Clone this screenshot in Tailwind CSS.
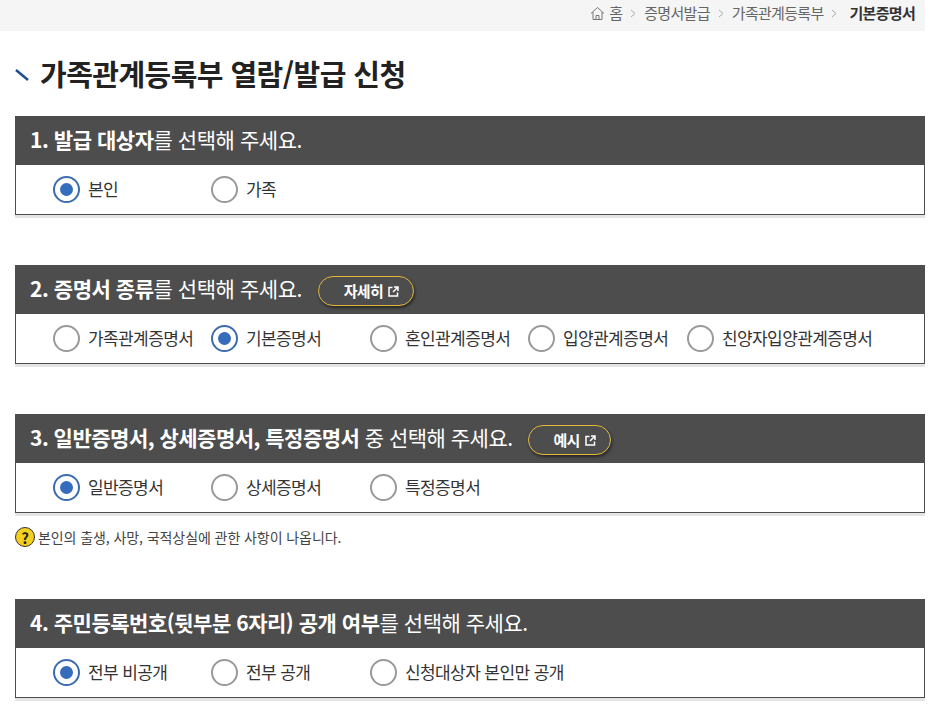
<!DOCTYPE html>
<html lang="ko">
<head>
  <meta charset="UTF-8" />
  <title>가족관계등록부 열람/발급 신청</title>
  <script src="https://cdn.jsdelivr.net/npm/@tailwindcss/browser@4"></script>
</head>
<body class="bg-white text-[#333] font-['Noto_Sans_CJK_KR','Noto_Sans',sans-serif] overflow-hidden">
  <div class="w-[925px] h-[723px] overflow-hidden">
    <nav class="h-[31px] pb-[5px] bg-[#f5f5f5] flex items-center justify-end pr-[10px] text-[15px] tracking-[-0.7px] text-[#666]">
      <svg class="w-[15px] h-[15px] mr-[4px]" viewBox="0 0 15 15" fill="none" stroke="#777" stroke-width="1"><path d="M1 7.500 7.500 1.500 14 7.500M3 6v7.500h9V6M6 13.500V9.500h3v4"/></svg>
      <span>홈</span>
      <svg class="w-[6px] h-[9px] mx-[8px]" viewBox="0 0 6 9" fill="none" stroke="#aaa"><path d="M1 1l4 3.500-4 3.500"/></svg>
      <span>증명서발급</span>
      <svg class="w-[6px] h-[9px] mx-[8px]" viewBox="0 0 6 9" fill="none" stroke="#aaa"><path d="M1 1l4 3.500-4 3.500"/></svg>
      <span>가족관계등록부</span>
      <svg class="w-[6px] h-[9px] ml-[8px] mr-[12px]" viewBox="0 0 6 9" fill="none" stroke="#aaa"><path d="M1 1l4 3.500-4 3.500"/></svg>
      <b class="font-bold text-[#333]">기본증명서</b>
    </nav>

    <h1 class="h-[85px] pt-[1px] pl-[15px] flex items-center font-bold text-[29px] tracking-[-0.55px] text-[#222]">
      <svg class="w-[14px] h-[12px] mr-[11px] mt-[2px]" viewBox="0 0 14 12" fill="none"><path d="M1 1l12 10" stroke="#1d4f91" stroke-width="2.500"/></svg>
      가족관계등록부 열람/발급 신청
    </h1>

    <section class="ml-[15px] mb-[50px] shadow-[0_3px_0_#e4e4e4]">
      <h2 class="h-[49px] pb-[1px] bg-[#4d4d4d] text-white text-[21px] pl-[15px] flex items-center font-normal tracking-[-0.45px]"><span><b class="font-bold">1. 발급 대상자</b>를 선택해 주세요.</span></h2>
      <div class="h-[50px] pb-[1px] border border-t-0 border-[#4d4d4d] pl-[37px] grid grid-cols-[158px_159px_158px_159px_1fr] items-center text-[17px] tracking-[-0.6px]">
        <label class="flex items-center gap-[8px]"><span class="w-[27px] h-[27px] rounded-full border-[2.500px] border-[#3b6cb0] flex items-center justify-center"><span class="w-[13px] h-[13px] rounded-full bg-[#356cbc]"></span></span>본인</label>
        <label class="flex items-center gap-[8px]"><span class="w-[27px] h-[27px] rounded-full border-[2.500px] border-[#999]"></span>가족</label>
      </div>
    </section>

    <section class="ml-[15px] mb-[50px] shadow-[0_3px_0_#e4e4e4]">
      <h2 class="h-[49px] pb-[1px] bg-[#4d4d4d] text-white text-[21px] pl-[15px] flex items-center font-normal tracking-[-0.45px]">
        <span><b class="font-bold">2. 증명서 종류</b>를 선택해 주세요.</span>
        <a class="ml-[16px] mt-[4px] w-[96px] h-[30px] rounded-full border border-[#e2b93b] shadow-[1px_2px_3px_rgba(0,0,0,0.5)] flex items-center justify-center gap-[5px] pl-[11px] text-[15px] font-bold tracking-[-0.7px]">자세히
          <svg class="w-[11px] h-[11px]" viewBox="0 0 11 11" fill="none" stroke="#fff" stroke-width="1.500"><path d="M4.500 1.500H1v8.500h8.500V6.500M6 1h4v4M10 1 5 6"/></svg>
        </a>
      </h2>
      <div class="h-[50px] pb-[1px] border border-t-0 border-[#4d4d4d] pl-[37px] grid grid-cols-[158px_159px_158px_159px_1fr] items-center text-[17px] tracking-[-0.6px]">
        <label class="flex items-center gap-[8px]"><span class="w-[27px] h-[27px] shrink-0 rounded-full border-[2.500px] border-[#999]"></span>가족관계증명서</label>
        <label class="flex items-center gap-[8px]"><span class="w-[27px] h-[27px] shrink-0 rounded-full border-[2.500px] border-[#3b6cb0] flex items-center justify-center"><span class="w-[13px] h-[13px] rounded-full bg-[#356cbc]"></span></span>기본증명서</label>
        <label class="flex items-center gap-[8px]"><span class="w-[27px] h-[27px] shrink-0 rounded-full border-[2.500px] border-[#999]"></span>혼인관계증명서</label>
        <label class="flex items-center gap-[8px]"><span class="w-[27px] h-[27px] shrink-0 rounded-full border-[2.500px] border-[#999]"></span>입양관계증명서</label>
        <label class="flex items-center gap-[8px]"><span class="w-[27px] h-[27px] shrink-0 rounded-full border-[2.500px] border-[#999]"></span>친양자입양관계증명서</label>
      </div>
    </section>

    <section class="ml-[15px] shadow-[0_3px_0_#e4e4e4]">
      <h2 class="h-[49px] pb-[1px] bg-[#4d4d4d] text-white text-[21px] pl-[15px] flex items-center font-normal tracking-[-0.5px]">
        <span><b class="font-bold">3. 일반증명서, 상세증명서, 특정증명서</b> 중 선택해 주세요.</span>
        <a class="ml-[15px] mt-[4px] w-[83px] h-[30px] rounded-full border border-[#e2b93b] shadow-[1px_2px_3px_rgba(0,0,0,0.5)] flex items-center justify-center gap-[5px] pl-[11px] text-[15px] font-bold tracking-[-0.7px]">예시
          <svg class="w-[11px] h-[11px]" viewBox="0 0 11 11" fill="none" stroke="#fff" stroke-width="1.500"><path d="M4.500 1.500H1v8.500h8.500V6.500M6 1h4v4M10 1 5 6"/></svg>
        </a>
      </h2>
      <div class="h-[50px] pb-[1px] border border-t-0 border-[#4d4d4d] pl-[37px] grid grid-cols-[158px_159px_158px_159px_1fr] items-center text-[17px] tracking-[-0.6px]">
        <label class="flex items-center gap-[8px]"><span class="w-[27px] h-[27px] rounded-full border-[2.500px] border-[#3b6cb0] flex items-center justify-center"><span class="w-[13px] h-[13px] rounded-full bg-[#356cbc]"></span></span>일반증명서</label>
        <label class="flex items-center gap-[8px]"><span class="w-[27px] h-[27px] rounded-full border-[2.500px] border-[#999]"></span>상세증명서</label>
        <label class="flex items-center gap-[8px]"><span class="w-[27px] h-[27px] rounded-full border-[2.500px] border-[#999]"></span>특정증명서</label>
      </div>
    </section>
    <p class="ml-[15px] h-[86px] pt-[14px] flex items-start gap-[3px] text-[14px] tracking-[-0.08px] text-[#444]">
      <span class="w-[20px] h-[20px] rounded-full bg-[#f5cf1f] border border-[#333] flex items-center justify-center font-bold text-[15px] leading-none text-[#222]">?</span>
      <span class="leading-[20px]">본인의 출생, 사망, 국적상실에 관한 사항이 나옵니다.</span>
    </p>

    <section class="ml-[15px] shadow-[0_3px_0_#e4e4e4]">
      <h2 class="h-[49px] pb-[1px] bg-[#4d4d4d] text-white text-[21px] pl-[15px] flex items-center font-normal tracking-[-0.47px]"><span><b class="font-bold">4. 주민등록번호(뒷부분 6자리) 공개 여부</b>를 선택해 주세요.</span></h2>
      <div class="h-[50px] pb-[1px] border border-t-0 border-[#4d4d4d] pl-[37px] grid grid-cols-[158px_159px_158px_159px_1fr] items-center text-[17px] tracking-[-0.6px]">
        <label class="flex items-center gap-[8px]"><span class="w-[27px] h-[27px] rounded-full border-[2.500px] border-[#3b6cb0] flex items-center justify-center"><span class="w-[13px] h-[13px] rounded-full bg-[#356cbc]"></span></span>전부 비공개</label>
        <label class="flex items-center gap-[8px]"><span class="w-[27px] h-[27px] rounded-full border-[2.500px] border-[#999]"></span>전부 공개</label>
        <label class="col-span-3 flex items-center gap-[8px]"><span class="w-[27px] h-[27px] rounded-full border-[2.500px] border-[#999]"></span>신청대상자 본인만 공개</label>
      </div>
    </section>
  </div>
</body>
</html>
